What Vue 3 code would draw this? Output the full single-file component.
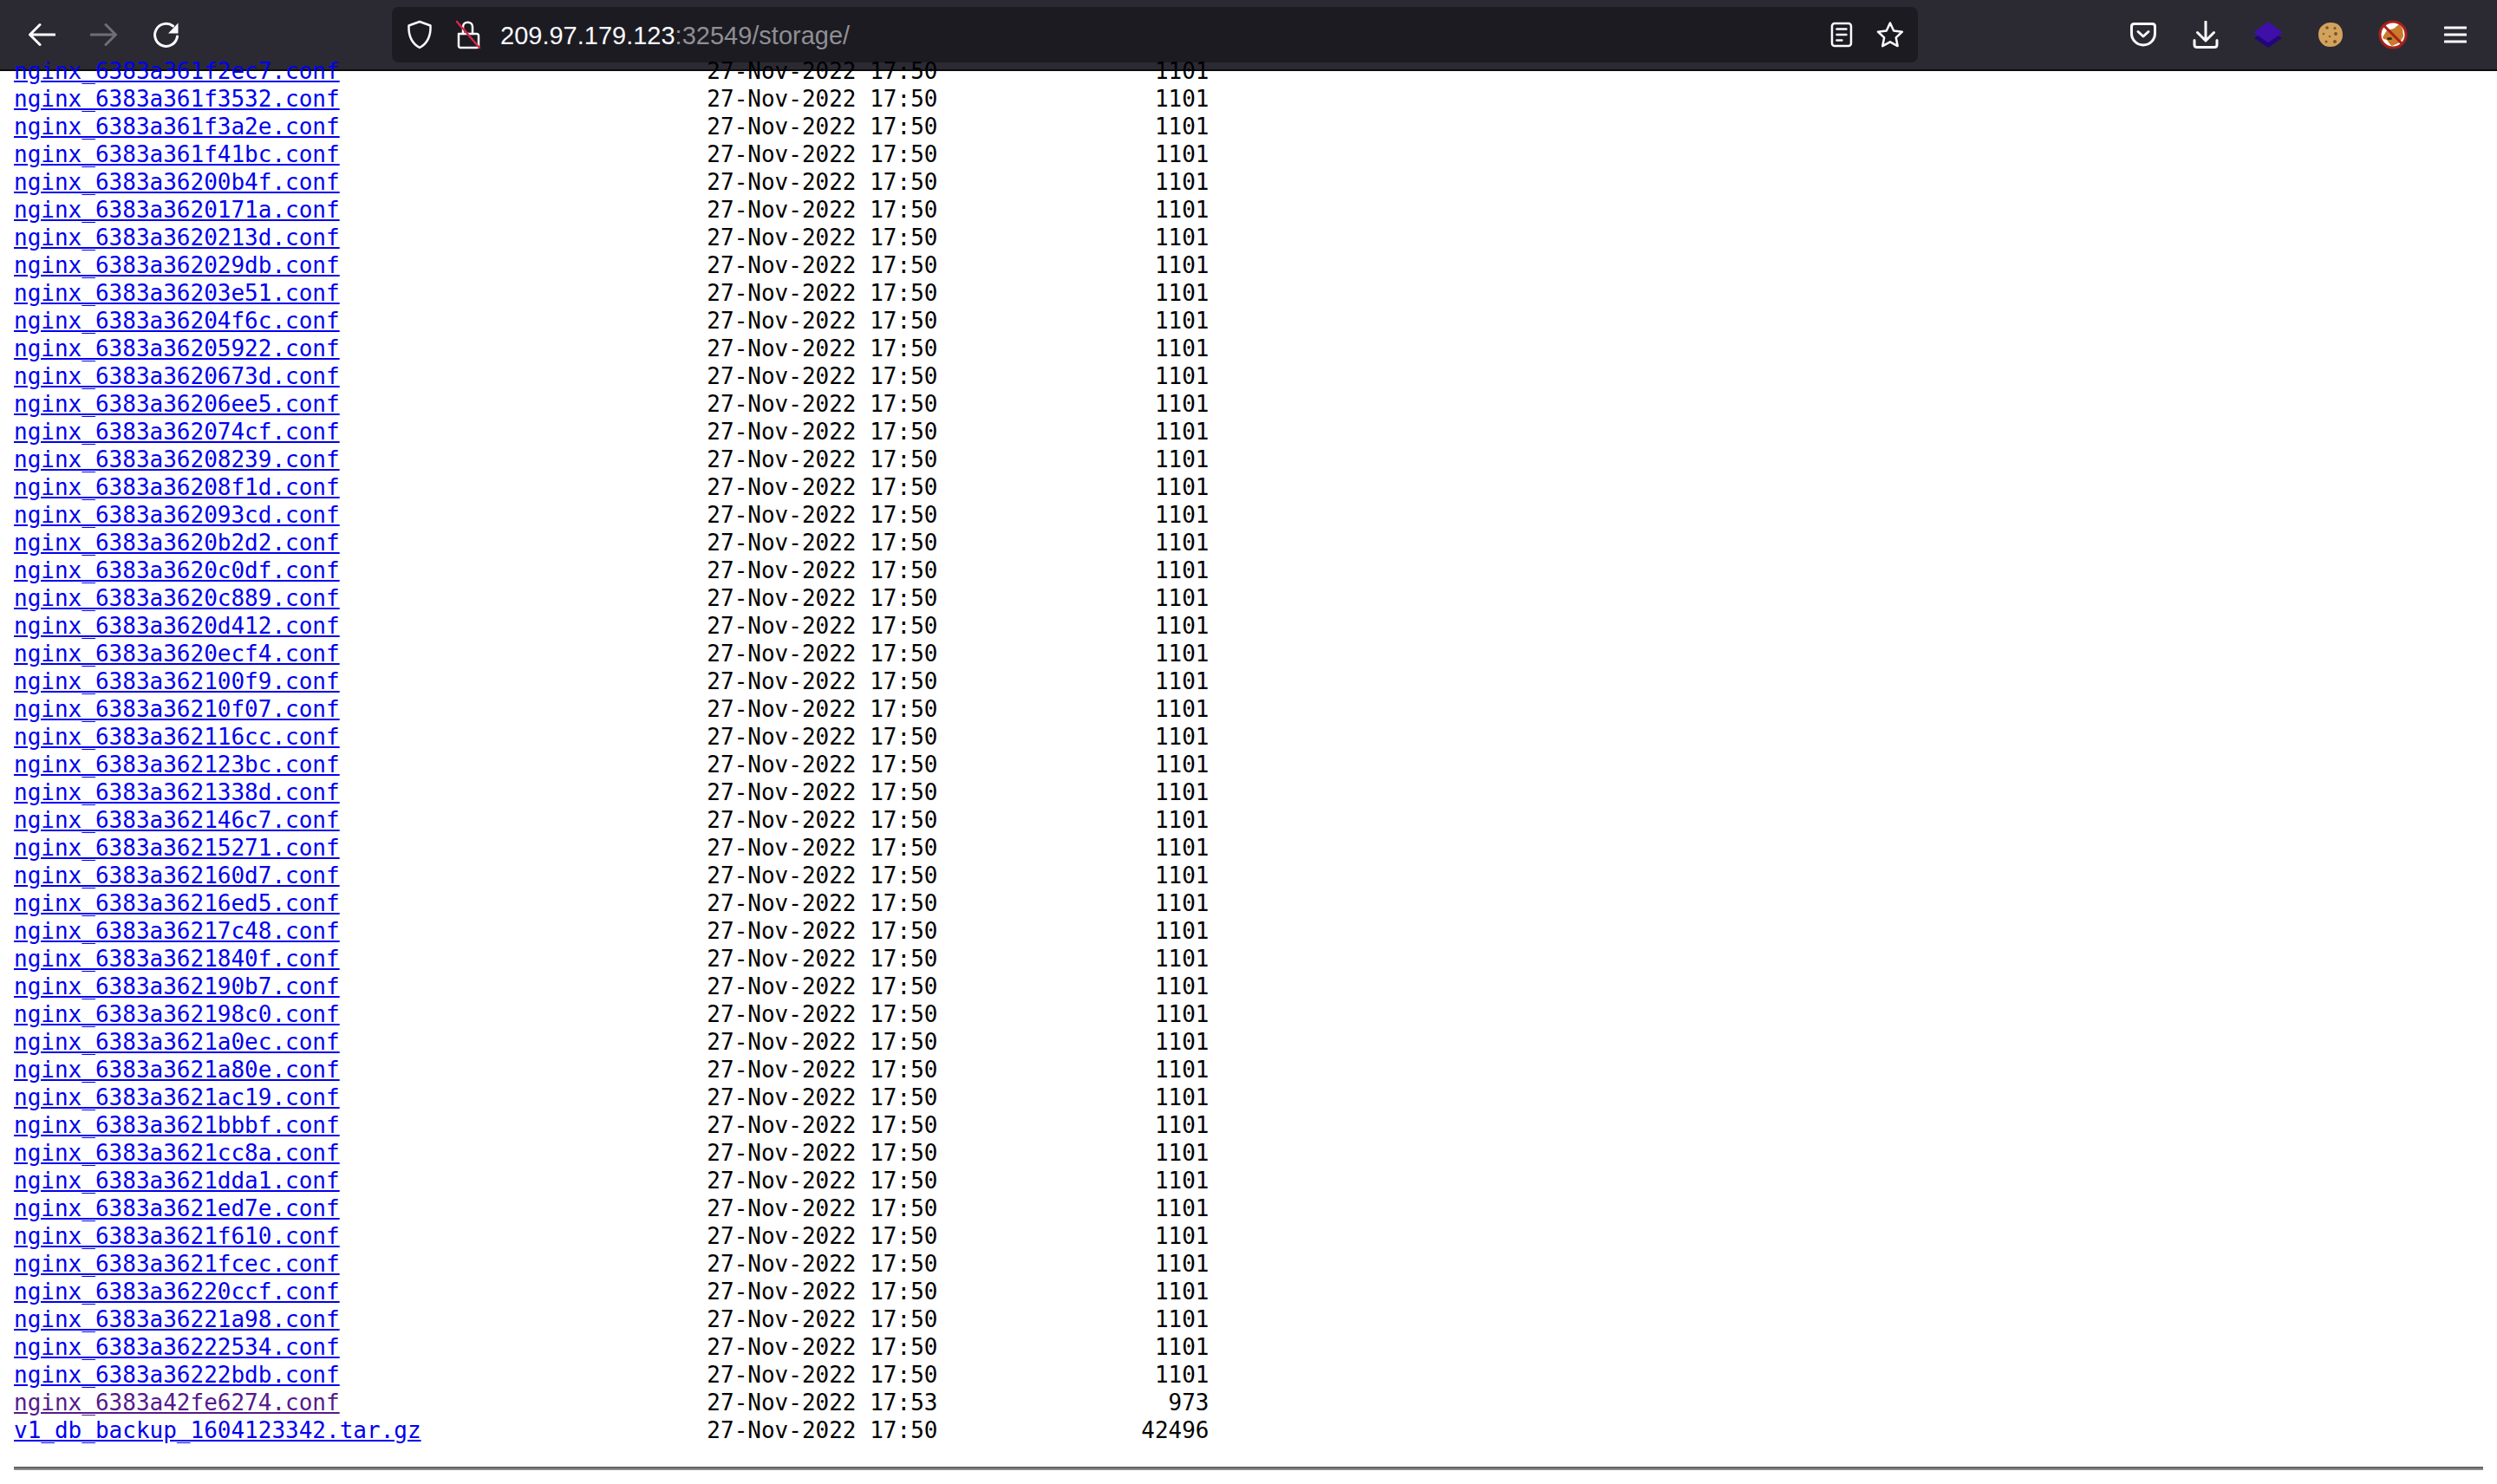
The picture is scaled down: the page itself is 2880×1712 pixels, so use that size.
<template>
    <div class="browser">
        <header class="toolbar">
            <div class="nav-buttons">
                <span class="tool-btn">
                    <svg width="32" height="32" viewBox="0 0 32 32" class="line-icon">
                        <path d="M31 16H3M14 4.500L2.500 16 14 27.500" />
                    </svg>
                </span>
                <span class="tool-btn">
                    <svg width="32" height="32" viewBox="0 0 32 32" class="line-icon disabled">
                        <path d="M1 16h28M18 4.500L29.500 16 18 27.500" />
                    </svg>
                </span>
                <span class="tool-btn">
                    <svg width="32" height="32" viewBox="0 0 32 32" class="line-icon">
                        <path d="M28.500 18a13 13 0 1 1-5-12" />
                        <path class="solid" d="M29.500 2.500v12h-11.500z" />
                    </svg>
                </span>
            </div>

            <div class="url-bar">
                <span class="shield">
                    <svg width="32" height="34" viewBox="0 0 32 34" class="line-icon thin">
                        <path d="M16 2l12.500 4.500c.5 11-2.500 20-12.500 25.500C6 26.500 3 17.500 3.500 6.500z" />
                    </svg>
                </span>
                <span class="lock">
                    <svg width="30" height="34" viewBox="0 0 30 34" class="line-icon thin">
                        <path d="M4 16h21c1 0 2 1 2 2v12c0 1-1 2-2 2H6c-1 0-2-1-2-2z" />
                        <path d="M9 16V8c0-7 11-7 11 0v8" />
                        <path class="slash" d="M2 2l26 30" />
                    </svg>
                </span>
                <div class="url-text">209.97.179.123<span class="url-dim">:32549/storage/</span></div>
                <span class="url-action">
                    <svg width="28" height="30" viewBox="0 0 28 30" class="line-icon thin">
                        <rect x="3" y="2" width="22" height="26" rx="3" />
                        <path d="M8.500 8.500h11M8.500 15h11M8.500 21.500h6" />
                    </svg>
                </span>
                <span class="url-action">
                    <svg width="34" height="32" viewBox="0 0 34 32" class="line-icon thin">
                        <path d="M17 2.500l4.200 9 9.800 1.200-7.200 6.700 1.900 9.700L17 24.300l-8.700 4.800 1.900-9.700L3 12.700l9.800-1.200z" />
                    </svg>
                </span>
            </div>

            <div class="actions">
                <span class="tool-btn">
                    <svg width="32" height="28" viewBox="0 0 32 28" class="line-icon">
                        <path d="M5.500 1.500h21c1.500 0 3 1 3 3v8c0 7.500-6 13.500-13.500 13.500S2.500 20 2.500 12.500v-8c0-2 1.500-3 3-3z" />
                        <path d="M10 10.500l6 5.500 6-5.500" />
                    </svg>
                </span>
                <span class="tool-btn">
                    <svg width="32" height="32" viewBox="0 0 32 32" class="line-icon">
                        <path d="M16 1v22M6.500 13.500L16 23l9.500-9.500" />
                        <path d="M3 22.500v5c0 2 1 3 3 3h20c2 0 3-1 3-3v-5" />
                    </svg>
                </span>
                <span class="tool-btn">
                    <svg width="36" height="30" viewBox="0 0 36 30">
                        <path fill="#22067a" d="M18 8l16 11-16 11L2 19z" />
                        <path fill="#3f10a9" d="M18 0l17 12.500L18 24 1 12.500z" />
                    </svg>
                </span>
                <span class="tool-btn">
                    <svg width="30" height="30" viewBox="0 0 30 30">
                        <path fill="#d3a25c" d="M15 1c5 0 8 1 10.500 4S29 11 29 15.500c0 4-1.500 7.500-4.500 10S19 29 14.500 29 7 27.500 4.500 24.500 1 19 1 14.500 2.500 7 5.500 4.500 11 1 15 1z" />
                        <circle cx="11" cy="7" r="1.800" fill="#7d5424" />
                        <circle cx="20" cy="7.500" r="1.500" fill="#7d5424" />
                        <circle cx="7" cy="14" r="1.300" fill="#8d6029" />
                        <circle cx="21" cy="14" r="2" fill="#7d5424" />
                        <circle cx="14" cy="17" r="1.300" fill="#8d6029" />
                        <circle cx="10" cy="23" r="1.500" fill="#7d5424" />
                        <circle cx="20" cy="23" r="2" fill="#7d5424" />
                    </svg>
                </span>
                <span class="tool-btn">
                    <svg width="34" height="34" viewBox="0 0 34 34">
                        <circle cx="17" cy="17" r="14.500" fill="#fff" />
                        <path fill="#c97a2c" d="M5 20l5-8 8-2 6-5 4 5 1 9-4 7-9 4-7-3z" />
                        <path fill="#fff" d="M3 21l7 2 5 7-5-1-5-4z" />
                        <ellipse cx="13" cy="21.500" rx="3" ry="1.500" fill="#3b2a18" />
                        <path d="M6 6l22 22" stroke="#a8201a" stroke-width="3" />
                        <circle cx="17" cy="17" r="15" fill="none" stroke="#a8201a" stroke-width="3" />
                    </svg>
                </span>
                <span class="tool-btn">
                    <svg width="26" height="20" viewBox="0 0 26 20" class="line-icon">
                        <path d="M1 2h24M1 10h24M1 18h24" />
                    </svg>
                </span>
            </div>
        </header>

        <main class="listing">
            <div v-for="row in rows" :key="row.name" class="row">
                <a href="#" :class="{ visited: row.visited }">{{ row.name }}</a><span class="rest">{{ row.rest }}</span>
            </div>
            <hr class="rule" />
        </main>
    </div>
</template>

<script setup>
// хэши конфигов в порядке листинга
const hashes = [
    '361f2ec7', '361f3532', '361f3a2e', '361f41bc', '36200b4f', '3620171a', '3620213d', '362029db',
    '36203e51', '36204f6c', '36205922', '3620673d', '36206ee5', '362074cf', '36208239', '36208f1d',
    '362093cd', '3620b2d2', '3620c0df', '3620c889', '3620d412', '3620ecf4', '362100f9', '36210f07',
    '362116cc', '362123bc', '3621338d', '362146c7', '36215271', '362160d7', '36216ed5', '36217c48',
    '3621840f', '362190b7', '362198c0', '3621a0ec', '3621a80e', '3621ac19', '3621bbbf', '3621cc8a',
    '3621dda1', '3621ed7e', '3621f610', '3621fcec', '36220ccf', '36221a98', '36222534', '36222bdb'
]

function makeRow(name, time, size, visited = false) {
    const rest = ' '.repeat(51 - name.length) + `27-Nov-2022 ${time}` + String(size).padStart(20)
    return { name, rest, visited }
}

const rows = [
    ...hashes.map((h) => makeRow(`nginx_6383a${h}.conf`, '17:50', 1101)),
    makeRow('nginx_6383a42fe6274.conf', '17:53', 973, true),
    makeRow('v1_db_backup_1604123342.tar.gz', '17:50', 42496)
]
</script>

<style scoped>
.browser {
    display: flex;
    flex-direction: column;
    height: 1712px;
    overflow: hidden;
    background: #fff;
}

.toolbar {
    display: flex;
    align-items: center;
    flex: none;
    height: 80px;
    padding: 0 12px;
    box-sizing: content-box;
    background: #2b2a33;
    border-bottom: 2px solid #0c0c0d;
}

.nav-buttons,
.actions {
    display: flex;
    align-items: center;
}

.actions {
    margin-left: auto;
}

.tool-btn {
    display: flex;
    align-items: center;
    justify-content: center;
    width: 72px;
    height: 64px;
}

.line-icon {
    fill: none;
    stroke: #fbfbfe;
    stroke-width: 3;
    stroke-linecap: round;
    stroke-linejoin: round;
}

.line-icon.thin {
    stroke-width: 2.5;
}

.line-icon.disabled {
    stroke: #6f6e75;
}

.line-icon .solid {
    fill: #fbfbfe;
    stroke: none;
}

.line-icon .slash {
    stroke: #d7264a;
}

.url-bar {
    display: flex;
    align-items: center;
    width: 1760px;
    height: 64px;
    margin-left: 224px;
    padding: 0 4px 0 16px;
    box-sizing: border-box;
    background: #1c1b22;
    border-radius: 8px;
}

.shield {
    display: flex;
    width: 32px;
    margin-right: 25px;
}

.lock {
    display: flex;
    width: 30px;
    margin-right: 22px;
}

.url-text {
    flex: 1;
    padding-top: 2px;
    color: #fbfbfe;
    font-family: "Liberation Sans", Arial, sans-serif;
    font-size: 29px;
}

.url-dim {
    color: #8f8f94;
}

.url-action {
    display: flex;
    align-items: center;
    justify-content: center;
    width: 56px;
    height: 64px;
}

.listing {
    display: flex;
    flex: 1;
    flex-direction: column;
    justify-content: flex-end;
    min-height: 0;
    padding: 0 16px 16px;
    color: #000;
    font-family: "DejaVu Sans Mono", monospace;
    font-size: 26px;
    line-height: 32px;
}

.row {
    flex: none;
    white-space: pre;
}

.row a {
    color: #0000ee;
}

.row a.visited {
    color: #551a8b;
}

.rest {
    margin-left: 1px;
}

.rule {
    flex: none;
    width: 100%;
    height: 4px;
    margin: 26px 0 0;
    box-sizing: border-box;
    border: none;
    border-top: 2px solid #636363;
    border-bottom: 2px solid #8a8a8a;
}
</style>

<style>
html,
body {
    margin: 0;
    overflow: hidden;
}
</style>
